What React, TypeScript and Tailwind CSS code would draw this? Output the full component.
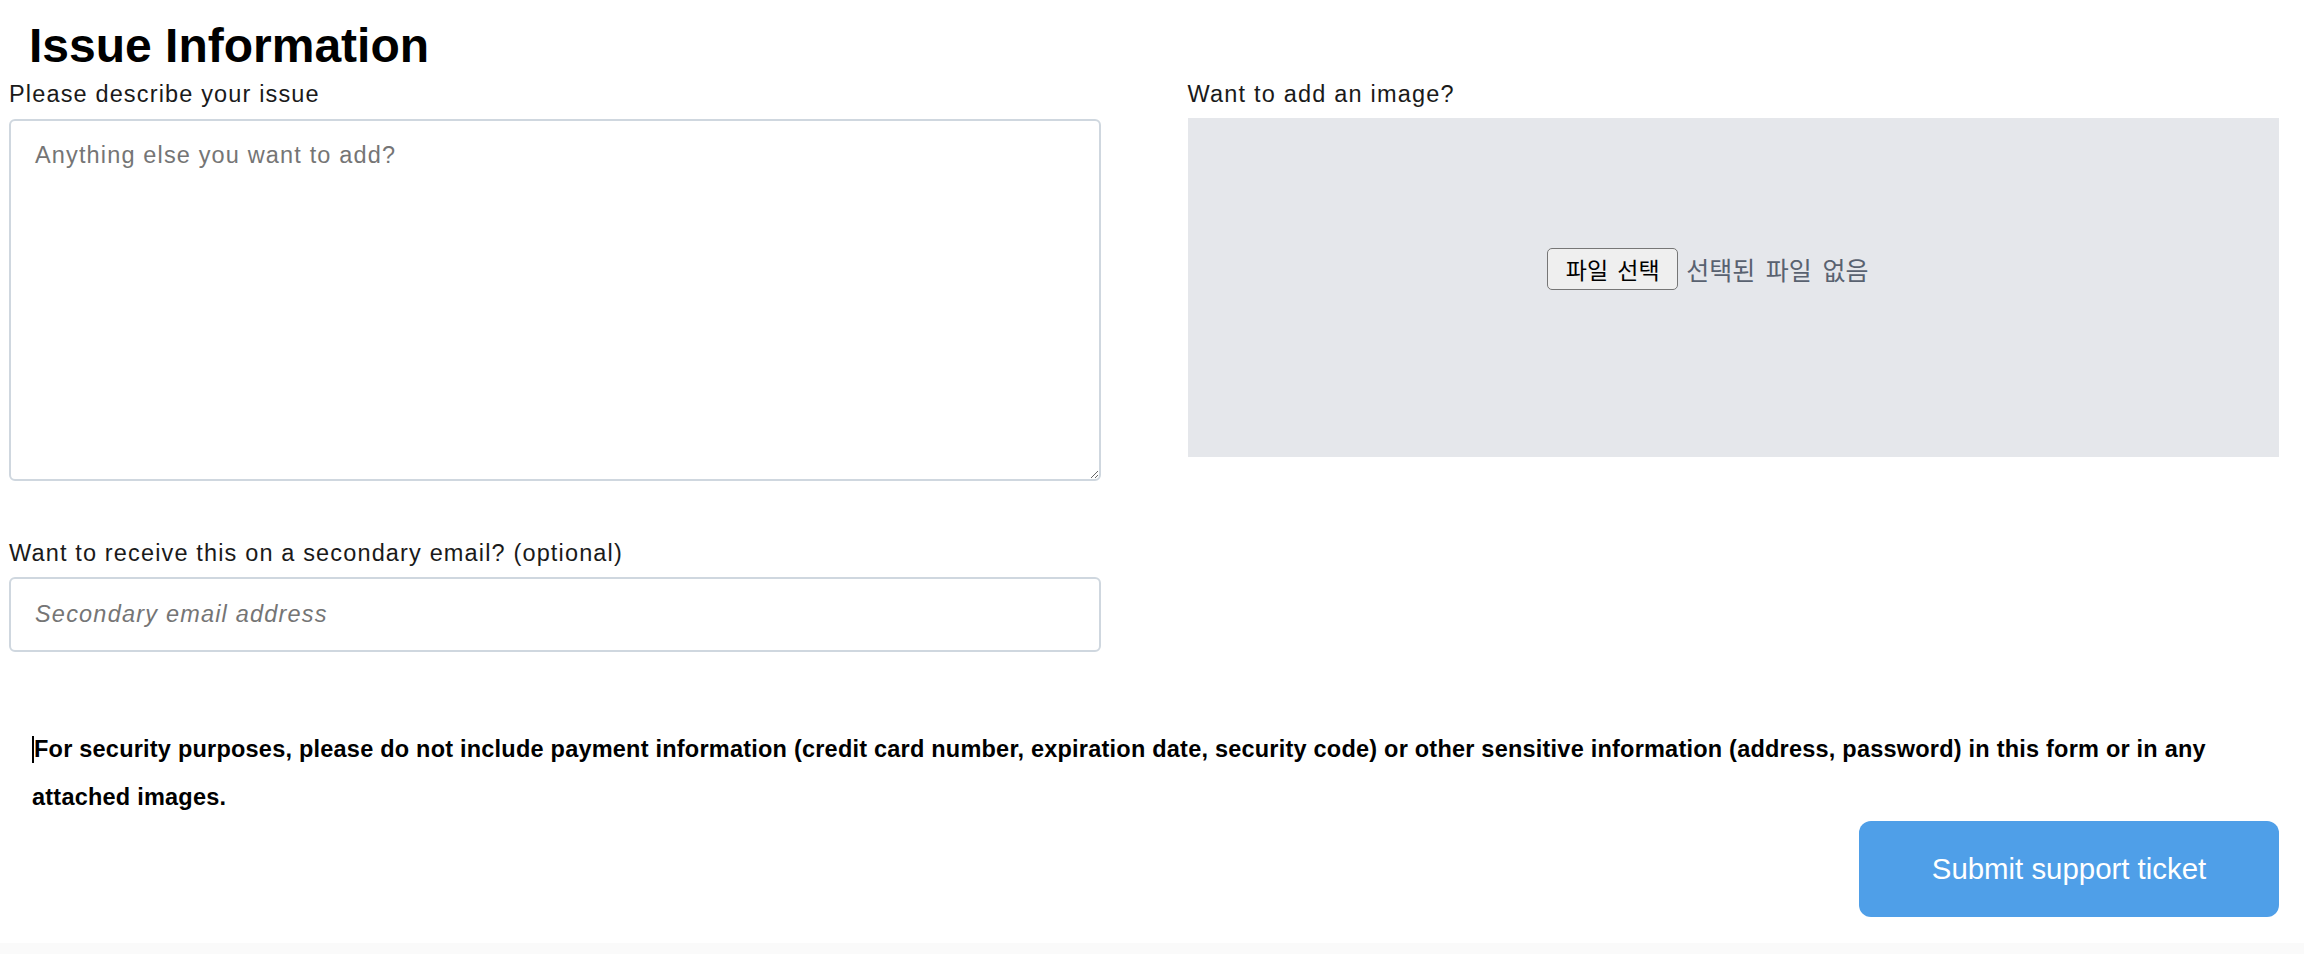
import React from "react";

export default function App() {
  return (
    <div className="min-h-screen bg-[#fafafa] font-['Liberation_Sans',Arial,sans-serif]">
      <div className="bg-white pl-[9px] pr-[25px] pb-[26px]">
        <h1 className="pl-[20px] pt-[25px] text-[48px] leading-[42px] font-bold text-black">
          Issue Information
        </h1>
        <div className="flex gap-[87px]">
          <div className="flex-1 min-w-0">
            <label className="mt-[10px] block text-[23.5px] leading-[34px] tracking-[1.15px] text-[#1a1a1a]">
              Please describe your issue
            </label>
            <textarea
              className="mt-[8px] block w-full h-[362px] rounded-[6px] border-2 border-[#cfd7df] bg-white px-[24px] py-[17px] text-[23.5px] leading-[35px] tracking-[1.15px] text-[#1a1a1a] placeholder:text-[#757575] outline-none"
              placeholder="Anything else you want to add?"
            />
            <label className="mt-[55px] block text-[23.5px] leading-[34px] tracking-[1.15px] text-[#1a1a1a]">
              Want to receive this on a secondary email? (optional)
            </label>
            <input
              type="email"
              className="mt-[7px] block w-full h-[75px] rounded-[6px] border-2 border-[#cfd7df] bg-white px-[24px] text-[23.5px] tracking-[1.2px] italic text-[#1a1a1a] placeholder:text-[#757575] outline-none"
              placeholder="Secondary email address"
            />
          </div>
          <div className="flex-1 min-w-0">
            <label className="mt-[10px] block text-[23.5px] leading-[34px] tracking-[1.2px] text-[#1a1a1a]">
              Want to add an image?
            </label>
            <div className="mt-[7px] h-[339px] bg-[#e5e7eb] flex justify-center pt-[130px]">
              <div className="w-[372px] h-[42px] flex items-center font-['Noto_Sans_CJK_KR',sans-serif]">
                <span className="w-[131px] h-[42px] flex items-center justify-center rounded-[5px] border-[1.5px] border-[#767676] bg-[#efefef] text-[23px] leading-none text-black [word-spacing:4px]">
                  파일 선택
                </span>
                <span className="ml-[8px] text-[25px] leading-none text-[#596270] [word-spacing:5px]">
                  선택된 파일 없음
                </span>
              </div>
            </div>
          </div>
        </div>
        <p className="mt-[73px] pl-[23px] text-[23.5px] leading-[48px] font-bold tracking-[0.22px] text-black">
          <span className="inline-block w-[2px] h-[27px] bg-black align-[-6px]" />
          For security purposes, please do not include payment information (credit card number, expiration date, security code) or other sensitive information (address, password) in this form or in any attached images.
        </p>
        <div className="flex justify-end">
          <button className="w-[420px] h-[96px] rounded-[12px] bg-[#4f9fe8] text-white text-[29.4px]">
            Submit support ticket
          </button>
        </div>
      </div>
    </div>
  );
}
